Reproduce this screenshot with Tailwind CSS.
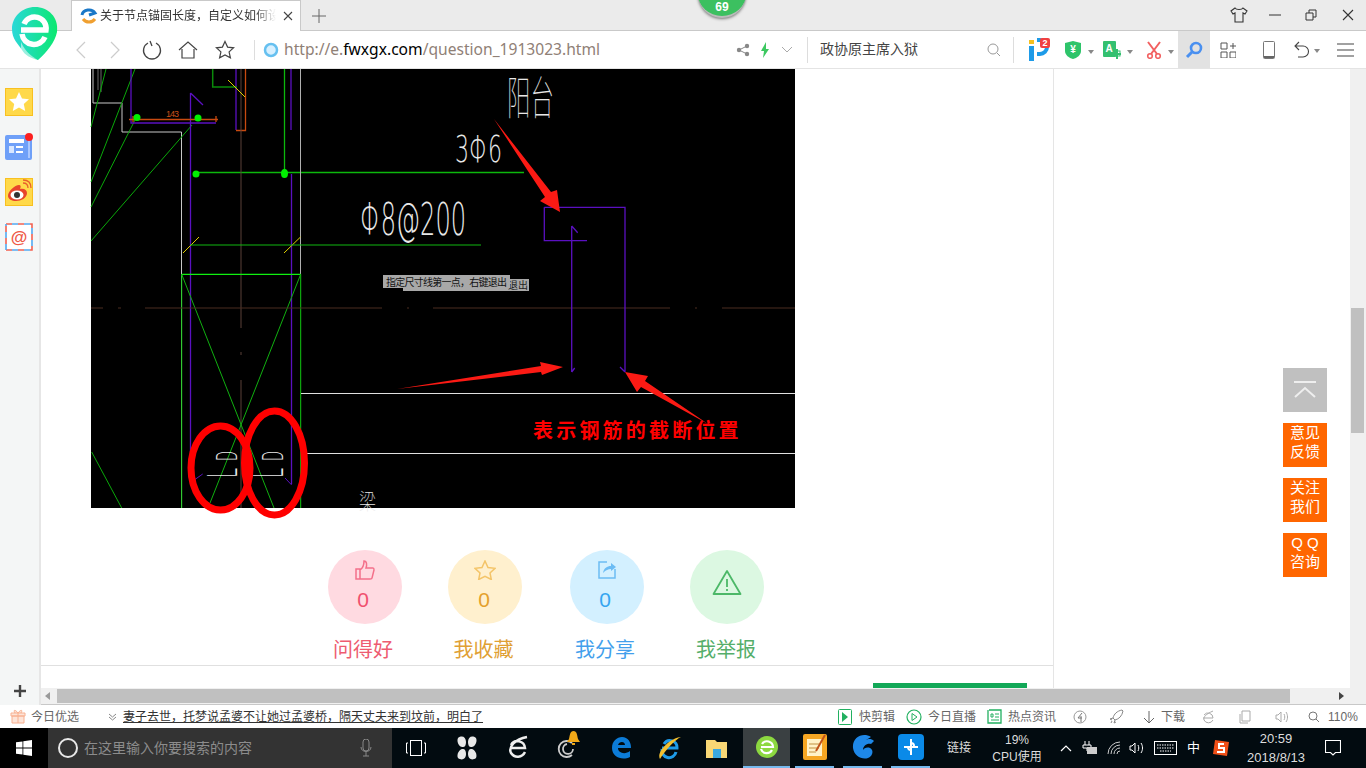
<!DOCTYPE html>
<html lang="zh-CN">
<head>
<meta charset="UTF-8">
<title>关于节点锚固长度，自定义如何设置</title>
<script src="https://cdn.jsdelivr.net/npm/@tailwindcss/browser@4"></script>
</head>
<body class="bg-white overflow-hidden">
<div class="relative w-[1366px] h-[768px] overflow-hidden flex flex-col font-['Liberation_Sans','Noto_Sans_CJK_SC',sans-serif]">

  <!-- tab strip -->
  <div class="h-[31px] shrink-0 bg-[#ebebeb] border-b border-[#c9c9c9] flex items-start pl-[71px]">
    <div class="w-[230px] h-[31px] bg-white border border-b-0 border-[#c9c9c9] flex items-center pl-[8px] pr-[7px]">
      <svg width="18" height="18" viewBox="0 0 18 18" class="shrink-0"><path d="M2 8a7 6 0 0 1 13-2l-6 2" fill="none" stroke="#1a78c8" stroke-width="3"/><path d="M3 12c3 4 9 4 12 0" fill="none" stroke="#f0a030" stroke-width="3"/></svg>
      <span class="ml-[2px] w-[176px] overflow-hidden whitespace-nowrap text-[12px] text-[#333] [mask-image:linear-gradient(to_right,black_88%,transparent)]">关于节点锚固长度，自定义如何设</span>
      <svg width="10" height="10" viewBox="0 0 10 10" class="ml-auto"><path d="M1 1l8 8M9 1l-8 8" stroke="#444" stroke-width="1.100"/></svg>
    </div>
    <svg width="14" height="14" viewBox="0 0 14 14" class="ml-[11px] mt-[9px]"><path d="M7 0v14M0 7h14" stroke="#666" stroke-width="1"/></svg>
    <div class="ml-auto flex items-center h-[30px]">
      <svg width="18" height="18" viewBox="0 0 18 18"><path d="M5 2l-4 3 2 3 2-1v9h8V7l2 1 2-3-4-3c-1 2-7 2-8 0z" fill="none" stroke="#333" stroke-width="1.100"/></svg>
      <svg width="12" height="12" viewBox="0 0 12 12" class="ml-[21px]"><path d="M0 6h12" stroke="#333"/></svg>
      <svg width="12" height="12" viewBox="0 0 12 12" class="ml-[24px]"><path d="M1 4h7v7H1zM4 4V1h7v7H8" fill="none" stroke="#333"/></svg>
      <svg width="12" height="12" viewBox="0 0 12 12" class="ml-[25px] mr-[12px]"><path d="M1 1l10 10M11 1L1 11" stroke="#333" stroke-width="1.100"/></svg>
    </div>
  </div>

  <!-- address bar -->
  <div class="h-[38px] shrink-0 bg-white border-b border-[#e4e4e4] flex items-center">
    <svg width="12" height="20" viewBox="0 0 12 20" class="ml-[75px]"><path d="M10 2L2 10l8 8" fill="none" stroke="#ccc" stroke-width="1.200"/></svg>
    <svg width="12" height="20" viewBox="0 0 12 20" class="ml-[22px]"><path d="M2 2l8 8-8 8" fill="none" stroke="#ccc" stroke-width="1.200"/></svg>
    <svg width="20" height="22" viewBox="0 0 20 22" class="ml-[21px]"><path d="M6 4a8.500 8.500 0 1 0 8 0M8 2l2 5" fill="none" stroke="#444" stroke-width="1.300"/></svg>
    <svg width="20" height="20" viewBox="0 0 20 20" class="ml-[16px]"><path d="M1 10l9-8 9 8M4 9v9h12V9" fill="none" stroke="#444" stroke-width="1.200"/></svg>
    <svg width="20" height="20" viewBox="0 0 20 20" class="ml-[17px]"><path d="M10 1.500l2.600 5.600 6 .7-4.500 4.100 1.300 6L10 15l-5.400 2.900 1.300-6-4.500-4.100 6-.7z" fill="none" stroke="#444" stroke-width="1.200"/></svg>
    <div class="ml-[19px] w-px h-[20px] bg-[#ddd]"></div>
    <svg width="16" height="16" viewBox="0 0 16 16" class="ml-[8px]"><circle cx="8" cy="8" r="6" fill="#d8f0ff" stroke="#66c0f0" stroke-width="2.500"/></svg>
    <div class="ml-[5px] w-[452px] whitespace-nowrap font-['Noto_Sans',sans-serif] text-[15.6px] text-[#8f8076]">http://e.<span class="text-black">fwxgx.com</span>/question_1913023.html</div>
    <svg width="14" height="14" viewBox="0 0 14 14"><path d="M3 7l8-4M3 7l8 4" stroke="#888"/><circle cx="3" cy="7" r="2.200" fill="#888"/><circle cx="11" cy="3" r="2.200" fill="#888"/><circle cx="11" cy="11" r="2.200" fill="#888"/></svg>
    <svg width="10" height="16" viewBox="0 0 10 16" class="ml-[10px]"><path d="M6 0L1 9h3l-1 7 6-9H6z" fill="#3cc860"/></svg>
    <svg width="12" height="8" viewBox="0 0 12 8" class="ml-[11px]"><path d="M1 1l5 5 5-5" fill="none" stroke="#aaa"/></svg>
    <div class="ml-[14px] w-px h-[26px] bg-[#ddd]"></div>
    <div class="ml-[12px] w-[160px] text-[14px] text-[#444] whitespace-nowrap">政协原主席入狱</div>
    <svg width="14" height="14" viewBox="0 0 14 14" class="ml-[7px]"><circle cx="6" cy="6" r="5" fill="none" stroke="#999"/><path d="M10 10l3 3" stroke="#999"/></svg>
    <div class="ml-[12px] w-px h-[26px] bg-[#ddd]"></div>
    <!-- plugin icons -->
    <svg width="24" height="24" viewBox="0 0 24 24" class="ml-[14px]"><rect x="1" y="8" width="5" height="15" fill="#1e9be8"/><rect x="1" y="2" width="5" height="4" fill="#f5c020"/><path d="M9 2h3a7 7 0 0 1 0 14H9" fill="none" stroke="#1e9be8" stroke-width="4"/><rect x="12" y="0" width="10" height="10" rx="2" fill="#f04040"/><text x="17" y="8" text-anchor="middle" font-size="9" font-weight="700" fill="#fff">2</text></svg>
    <svg width="18" height="20" viewBox="0 0 18 20" class="ml-[12px]"><path d="M9 1l8 2v8c0 4-4 7-8 8-4-1-8-4-8-8V3z" fill="#2ec46a"/><text x="9" y="13" text-anchor="middle" font-size="10" font-weight="700" fill="#fff">¥</text></svg>
    <svg width="6" height="4" viewBox="0 0 6 4" class="ml-[6px] mt-[4px]"><path d="M0 0h6L3 4z" fill="#888"/></svg>
    <svg width="20" height="20" viewBox="0 0 20 20" class="ml-[8px]"><rect x="1" y="1" width="13" height="16" rx="1" fill="#34c070"/><text x="7" y="12" text-anchor="middle" font-size="10" font-weight="700" fill="#fff">A</text><path d="M15 9v10M11 14h8" stroke="#34c070" stroke-width="2"/><rect x="12" y="11" width="6" height="5" fill="none" stroke="#34c070"/></svg>
    <svg width="6" height="4" viewBox="0 0 6 4" class="ml-[5px] mt-[4px]"><path d="M0 0h6L3 4z" fill="#888"/></svg>
    <svg width="16" height="18" viewBox="0 0 16 18" class="ml-[13px]"><path d="M2 1l9 12M14 1L5 13" stroke="#f26060" stroke-width="2"/><circle cx="4" cy="15" r="2.300" fill="none" stroke="#f26060" stroke-width="1.600"/><circle cx="12" cy="15" r="2.300" fill="none" stroke="#f26060" stroke-width="1.600"/></svg>
    <svg width="6" height="4" viewBox="0 0 6 4" class="ml-[6px] mt-[4px]"><path d="M0 0h6L3 4z" fill="#888"/></svg>
    <div class="ml-[4px] w-[32px] h-[37px] bg-[#e2e2e2] flex items-center justify-center">
      <svg width="18" height="18" viewBox="0 0 18 18"><circle cx="11" cy="7" r="5" fill="none" stroke="#4a90f0" stroke-width="2.600"/><path d="M7 11l-5 5" stroke="#4a90f0" stroke-width="3"/></svg>
    </div>
    <svg width="16" height="16" viewBox="0 0 16 16" class="ml-[10px]"><path d="M1 1h6v6H1zM1 10h6v6H1zM10 10h6v6h-6zM13 1v6M10 4h6" fill="none" stroke="#555"/></svg>
    <svg width="12" height="18" viewBox="0 0 12 18" class="ml-[27px]"><rect x=".5" y=".5" width="11" height="17" rx="1" fill="none" stroke="#777"/><rect x="1" y="15" width="10" height="2" fill="#666"/></svg>
    <svg width="16" height="18" viewBox="0 0 16 18" class="ml-[19px]"><path d="M5 1L1 5l4 4M1 5h8a5.500 5.500 0 0 1 0 11H4" fill="none" stroke="#444" stroke-width="1.100"/></svg>
    <svg width="6" height="4" viewBox="0 0 6 4" class="ml-[4px] mt-[2px]"><path d="M0 0h6L3 4z" fill="#888"/></svg>
    <svg width="17" height="14" viewBox="0 0 17 14" class="ml-[17px]"><path d="M0 1h17M0 7h17M0 13h17" stroke="#444" stroke-width="1.200"/></svg>
  </div>

  <!-- browser window body -->
  <div class="h-[636px] shrink-0 flex">
    <div class="w-[41px] shrink-0 bg-[#f4f6f6] border-r-2 border-[#e6e6e6] flex flex-col items-start pl-[5px] pt-[19px] gap-[17px]">
      <svg width="28" height="28" viewBox="0 0 28 28"><rect x=".5" y=".5" width="27" height="27" fill="#ffd94a" stroke="#f8c020"/><path d="M14 4l3 6.500 7 .8-5.200 4.800 1.400 7L14 19.600 7.800 23l1.400-7L4 11.300l7-.8z" fill="#fff"/></svg>
      <svg width="28" height="28" viewBox="0 0 28 28"><rect x="0" y="2" width="27" height="25" rx="2" fill="#6fa0f8"/><rect x="23" y="4" width="2" height="21" fill="#a9c7ff"/><rect x="4" y="6" width="15" height="4" fill="#fff"/><rect x="4" y="13" width="5" height="7" fill="#d7e6ff"/><path d="M11 14h7M11 19h7" stroke="#fff" stroke-width="2"/><circle cx="24" cy="4" r="4" fill="#fb2020"/></svg>
      <svg width="28" height="28" viewBox="0 0 28 28"><rect x=".5" y=".5" width="27" height="27" fill="#ffd94a" stroke="#f8c020"/><path d="M3 18c0-5 7-11 11-11 2 0 2 2 1 4 4-1 7 1 7 4 0 5-6 8-11 8-4 0-8-2-8-5z" fill="#e8442c"/><ellipse cx="12" cy="17" rx="6.500" ry="4.500" fill="#fff"/><circle cx="12" cy="17" r="3" fill="#333"/><path d="M18 5c3 0 5 2 5 5M18 2c5 0 8 3 8 8" fill="none" stroke="#e8602c" stroke-width="1.300"/></svg>
      <svg width="28" height="28" viewBox="0 0 28 28"><rect x="0" y="0" width="28" height="28" fill="#fff"/><rect x="1" y="1" width="26" height="26" fill="none" stroke="#f06050" stroke-width="1.600" stroke-dasharray="6 6"/><rect x="1" y="1" width="26" height="26" fill="none" stroke="#50a8f0" stroke-width="1.600" stroke-dasharray="6 6" stroke-dashoffset="6"/><text x="14" y="20" text-anchor="middle" font-size="17" font-weight="700" fill="#ee5a48">@</text></svg>
      <svg width="14" height="14" viewBox="0 0 14 14" class="ml-[8px] mt-[416px]"><path d="M7 1v12M1 7h12" stroke="#444" stroke-width="2.400"/></svg>
    </div>

    <div class="w-[1325px] flex flex-col">
      <div class="h-[619px] flex">
        <div class="w-[1013px] border-r border-[#e5e5e5] overflow-hidden flex flex-col">
          <div class="ml-[50px] w-[704px] h-[439px] shrink-0 bg-black">
            <!-- CAD drawing from the question, coordinates are page pixels -->
            <svg width="704" height="439" viewBox="91 69 704 439" class="overflow-visible block">
              <g fill="none" stroke-width="1">
                <path d="M93 69v34h29v29h59.500v376" stroke="#c8c8c8"/>
                <path d="M98 69v21M101 69v23" stroke="#6a6a6a"/>
                <path d="M106 69L91 127M135 69L91 182M135 120L91 207M192 125L91 241M91.700 452L121.700 508" stroke="#0aa80a"/>
                <path d="M131 69v54h85M190.500 93V484M190.500 93L203 105M236 69v61M291 69v61M291.500 174V484" stroke="#5a10c0" stroke-width="1.300"/>
                <path d="M245.500 69v61.500H236M129 119.500h89M133 116v6M216 116v6" stroke="#c84a10" stroke-width="1.300"/>
                <path d="M212.700 69v18H237" stroke="#0a8a0a" stroke-width="1.500"/>
                <path d="M284.500 69v104M196 172.500H524" stroke="#0cb80c" stroke-width="1.300"/>
                <path d="M300.500 69v205" stroke="#b0b0b0"/>
                <path d="M241 69v259M241 352v3M241 380v128" stroke="#5a4038"/>
                <path d="M228 80l17 17M183 253l16-16M284 253l16.500-16" stroke="#e0d000"/>
                <path d="M190 245H481" stroke="#10b810"/>
                <path d="M181.700 274.300H300.700" stroke="#10f010" stroke-width="1.300"/>
                <path d="M181.700 274.300V508M300.700 274.300V508" stroke="#10c810"/>
                <path d="M181.700 274.300L274 508M300.700 274.300L210 503" stroke="#10b010"/>
                <path d="M190 483l12.700-9M291.700 485l-6.700-7" stroke="#5a10c0"/>
                <path d="M91 308h12M118 308h3M145 308h237M407 308h2M433 308h237M695 308h2M722 308h73" stroke="#4a2c20"/>
                <path d="M301 393.500H795M306 453.500H795" stroke="#e0e0e0"/>
                <path d="M544.300 207.300H625V372M544.300 207.300V240.700H587M571.700 226V372M571.700 226l6 6.700M571.700 372l3-4M620 367l5 5" stroke="#5a10c0" stroke-width="1.300"/>
              </g>
              <circle cx="137" cy="117.500" r="3.500" fill="#00f000"/>
              <circle cx="198" cy="118" r="3.500" fill="#00f000"/>
              <circle cx="196" cy="174" r="3.500" fill="#00f000"/>
              <ellipse cx="284.500" cy="173.500" rx="3.500" ry="4.500" fill="#00f000"/>
              <text x="166" y="117" font-size="9" fill="#c8501a" textLength="13">143</text>
              <g fill="#e8e8e8" font-family="'DejaVu Sans','Noto Sans CJK SC',sans-serif" font-weight="200">
                <text x="507" y="114" font-size="46" textLength="47" lengthAdjust="spacingAndGlyphs" font-family="'Noto Sans CJK SC',sans-serif" font-weight="100">阳台</text>
                <text x="455" y="162" font-size="38" textLength="47" lengthAdjust="spacingAndGlyphs">3Φ6</text>
                <text x="360" y="235" font-size="44" textLength="106" lengthAdjust="spacingAndGlyphs">Φ8@200</text>
                <text x="359" y="509" font-size="22" textLength="17" lengthAdjust="spacingAndGlyphs" font-family="'Noto Sans CJK SC',sans-serif" font-weight="100">梁</text>
                <text transform="translate(237,478) rotate(-90) scale(.45,1)" font-size="40">L</text>
                <text transform="translate(237,461) rotate(-90) scale(.45,1)" font-size="29">D</text>
                <text transform="translate(283,478) rotate(-90) scale(.45,1)" font-size="40">L</text>
                <text transform="translate(283,461) rotate(-90) scale(.45,1)" font-size="29">D</text>
              </g>
              <rect x="403" y="279" width="126" height="12" fill="#a8a8a8"/>
              <text x="508" y="289" font-size="10" fill="#222">退出</text>
              <rect x="383" y="275" width="127" height="13" fill="#a8a8a8"/>
              <text x="386" y="286" font-size="10" fill="#111" textLength="121">指定尺寸线第一点，右键退出</text>
              <ellipse cx="220.500" cy="468" rx="29.500" ry="42" fill="none" stroke="#ff0000" stroke-width="7"/>
              <ellipse cx="274.500" cy="463" rx="30" ry="52" fill="none" stroke="#ff0000" stroke-width="7"/>
              <polygon points="494,119 551,192 557,190 560,212 540,201 545,197" fill="#fb1a14"/>
              <polygon points="397,389 541,366 540,362 563,367 542,375 541,372" fill="#fb1a14"/>
              <polygon points="708,424 645,381 648,376 625,372 637,392 641,387" fill="#fb1a14"/>
              <text x="533" y="438" font-size="20" font-weight="700" letter-spacing="3.200" fill="#f00" font-family="'Noto Sans CJK SC',sans-serif">表示钢筋的截断位置</text>
            </svg>
          </div>

          <!-- vote buttons -->
          <div class="ml-[287px] mt-[42px] flex shrink-0">
            <div class="w-[74px] flex flex-col items-center">
              <div class="w-[74px] h-[74px] rounded-full bg-[#ffdae1] flex flex-col items-center pt-[10px] text-[21px] leading-[24px] text-[#f0506e]">
                <svg width="20" height="20" viewBox="0 0 20 20"><path d="M1 9h4v10H1zM5 10c3-2 4-5 4-9 3 0 3 4 2 7h7c1 0 1 1 1 2l-2 8c0 1-1 1-2 1H5" fill="none" stroke="#f4708a" stroke-width="1.500"/></svg>
                <span class="mt-[8px] pr-[4px]">0</span>
              </div>
              <div class="mt-[14px] pr-[4px] w-full text-center whitespace-nowrap text-[20px] leading-[24px] text-[#ee5b70]">问得好</div>
            </div>
            <div class="ml-[46px] w-[74px] flex flex-col items-center">
              <div class="w-[74px] h-[74px] rounded-full bg-[#fff0ce] flex flex-col items-center pt-[10px] text-[21px] leading-[24px] text-[#e4a02c]">
                <svg width="22" height="20" viewBox="0 0 22 20"><path d="M11 1l3 6.500 7 .8-5 4.700 1.300 6.500L11 16.300 4.700 19.500 6 13 1 8.300l7-.8z" fill="none" stroke="#f4c468" stroke-width="1.500"/></svg>
                <span class="mt-[8px] pr-[2px]">0</span>
              </div>
              <div class="mt-[14px] pr-[3px] w-full text-center whitespace-nowrap text-[20px] leading-[24px] text-[#e0a034]">我收藏</div>
            </div>
            <div class="ml-[48px] w-[74px] flex flex-col items-center">
              <div class="w-[74px] h-[74px] rounded-full bg-[#d3f0ff] flex flex-col items-center pt-[10px] text-[21px] leading-[24px] text-[#35a5f0]">
                <svg width="20" height="20" viewBox="0 0 20 20"><path d="M10 2H2v16h16V9" fill="none" stroke="#6cbcf4" stroke-width="1.500"/><path d="M6 13c1-5 4-7 8-7V3l5 4-5 4V9c-3 0-5 1-8 4z" fill="#6cbcf4"/></svg>
                <span class="mt-[8px] pr-[4px]">0</span>
              </div>
              <div class="mt-[14px] pr-[4px] w-full text-center whitespace-nowrap text-[20px] leading-[24px] text-[#439fec]">我分享</div>
            </div>
            <div class="ml-[46px] w-[74px] flex flex-col items-center">
              <div class="w-[74px] h-[74px] rounded-full bg-[#dcf8e2] flex items-start justify-center pt-[19px]">
                <svg width="30" height="27" viewBox="0 0 30 27"><path d="M15 2L1.500 25h27z" fill="none" stroke="#4cb868" stroke-width="1.800" stroke-linejoin="round"/><path d="M15 10v8M15 20v2" stroke="#4cb868" stroke-width="1.800"/></svg>
              </div>
              <div class="mt-[14px] pr-[2px] w-full text-center whitespace-nowrap text-[20px] leading-[24px] text-[#55ae6a]">我举报</div>
            </div>
          </div>

          <div class="mt-[3px] h-px shrink-0 bg-[#e0e0e0]"></div>
          <div class="ml-[832px] mt-[17px] w-[154px] h-[5px] shrink-0 bg-[#13a858]"></div>
        </div>
        <div class="w-[296px] bg-white"></div>
        <div class="w-[16px] bg-[#f0f0f0] pl-[1px] pr-[2px] pt-[239px]">
          <div class="h-[125px] bg-[#c0c0c0]"></div>
        </div>
      </div>
      <!-- horizontal scrollbar -->
      <div class="h-[17px] bg-[#f0f0f0] border-b border-[#c8c8c8] flex items-center">
        <svg width="6" height="8" viewBox="0 0 6 8" class="ml-[4px]"><path d="M5 0v8L0 4z" fill="#999"/></svg>
        <div class="ml-[6px] w-[1233px] h-[14px] bg-[#c0c0c0]"></div>
        <svg width="6" height="8" viewBox="0 0 6 8" class="ml-[49px]"><path d="M0 0v8l5-4z" fill="#444"/></svg>
      </div>
    </div>
  </div>

  <!-- status bar -->
  <div class="h-[23px] shrink-0 bg-white flex items-center text-[12px] text-[#666] whitespace-nowrap">
    <svg width="16" height="15" viewBox="0 0 16 15" class="ml-[10px]"><path d="M1 4h14v3H1zM2 7h12v7H2zM8 4v10M8 4C5 0 3 1 5 4M8 4c3-4 5-3 3 0" fill="#fde4d8" stroke="#f8b090"/></svg>
    <span class="ml-[5px] w-[48px] text-[12px]">今日优选</span>
    <svg width="9" height="8" viewBox="0 0 9 8" class="ml-[29px]"><path d="M1 1l3.500 3L8 1M1 4l3.500 3L8 4" fill="none" stroke="#888"/></svg>
    <span class="ml-[6px] w-[360px] text-[12px] text-[#333] underline">妻子去世，托梦说孟婆不让她过孟婆桥，隔天丈夫来到坟前，明白了</span>
    <svg width="14" height="16" viewBox="0 0 14 16" class="ml-[355px]"><rect x=".5" y=".5" width="13" height="15" rx="1" fill="none" stroke="#22b060"/><path d="M4 3l6 5-6 5z" fill="#22b060"/></svg>
    <span class="ml-[7px] w-[36px]">快剪辑</span>
    <svg width="16" height="16" viewBox="0 0 16 16" class="ml-[11px]"><circle cx="8" cy="8" r="7" fill="none" stroke="#22b060" stroke-width="1.200"/><path d="M6 4.500l5 3.500-5 3.500z" fill="none" stroke="#22b060"/></svg>
    <span class="ml-[6px] w-[49px]">今日直播</span>
    <svg width="15" height="15" viewBox="0 0 15 15" class="ml-[10px]"><path d="M2 1h12v13H1V1" fill="none" stroke="#22b060" stroke-width="1.300"/><path d="M4 5h2v3H4zM8 5h4M8 8h4M4 11h8" stroke="#22b060" fill="none"/></svg>
    <span class="ml-[6px] w-[48px]">热点资讯</span>
    <svg width="14" height="14" viewBox="0 0 14 14" class="ml-[17px]"><circle cx="7" cy="7" r="6" fill="none" stroke="#999"/><path d="M9 3L5 8h4M8 6v6" fill="none" stroke="#777"/></svg>
    <svg width="15" height="15" viewBox="0 0 15 15" class="ml-[22px]"><path d="M13 1c-5 1-8 4-9 8l2 2c4-1 7-4 8-9zM4 9l-3 1 2 1M6 11l-1 3 2-1M3 12l-1 2" fill="none" stroke="#888"/></svg>
    <svg width="12" height="14" viewBox="0 0 12 14" class="ml-[19px]"><path d="M6 1v12M1 8l5 5 5-5" fill="none" stroke="#666"/></svg>
    <span class="ml-[6px] w-[24px]">下载</span>
    <svg width="14" height="14" viewBox="0 0 14 14" class="ml-[16px]"><path d="M2 8h10a5 5 0 0 0-9-3M12 10a5 5 0 0 1-9 0c-1-3 2-6 9-9" fill="none" stroke="#aaa"/></svg>
    <svg width="12" height="14" viewBox="0 0 12 14" class="ml-[24px]"><path d="M1 4v9h8M3 1h8v10H3z" fill="none" stroke="#aaa"/></svg>
    <svg width="14" height="14" viewBox="0 0 14 14" class="ml-[24px]"><path d="M1 5v4h2l3 3V2L3 5zM9 4c1 2 1 4 0 6M11 2c2 3 2 7 0 10" fill="none" stroke="#aaa"/></svg>
    <svg width="12" height="12" viewBox="0 0 12 12" class="ml-[19px]"><circle cx="5" cy="5" r="4" fill="none" stroke="#777"/><path d="M8 8l3 3" stroke="#777"/></svg>
    <span class="ml-[8px]">110%</span>
  </div>

  <!-- windows taskbar -->
  <div class="h-[40px] shrink-0 bg-[#020b10] flex items-center text-white whitespace-nowrap relative">
    <div class="w-[48px] h-[40px] bg-black flex items-center justify-center">
      <svg width="16" height="16" viewBox="0 0 16 16"><path d="M0 2.300l6.500-.9v6.200H0zM7.300 1.300L16 0v7.600H7.300zM0 8.400h6.500v6.200L0 13.700zM7.300 8.400H16V16l-8.700-1.300z" fill="#fff"/></svg>
    </div>
    <div class="w-[344px] h-[40px] bg-[#333] flex items-center">
      <svg width="22" height="22" viewBox="0 0 22 22" class="ml-[9px]"><circle cx="11" cy="11" r="9" fill="none" stroke="#e8e8e8" stroke-width="2"/></svg>
      <span class="ml-[5px] w-[276px] text-[14px] text-[#8c8c8c]">在这里输入你要搜索的内容</span>
      <svg width="12" height="18" viewBox="0 0 12 18"><rect x="3" y="0" width="6" height="12" rx="3" fill="none" stroke="#888"/><path d="M1 8c0 6 10 6 10 0M6 13v4M3 17h6" fill="none" stroke="#888"/></svg>
    </div>
    <svg width="20" height="16" viewBox="0 0 20 16" class="ml-[14px]"><rect x="4.500" y=".5" width="11" height="15" fill="none" stroke="#fff"/><path d="M2 3H.5v10H2M18 3h1.500v10H18" fill="none" stroke="#fff"/></svg>
    <svg width="24" height="26" viewBox="0 0 24 26" class="ml-[29px]"><path d="M3 3c4-3 8-1 8 4 0 3-1 5-3 5-3 1-7-5-5-9zM21 3c2 4-2 10-5 9-2 0-3-2-3-5 0-5 4-7 8-4zM3 23c-2-4 2-10 5-9 2 0 3 2 3 5 0 5-4 7-8 4zM21 23c-4 3-8 1-8-4 0-3 1-5 3-5 3-1 7 5 5 9z" fill="#e8e8e8"/></svg>
    <svg width="22" height="26" viewBox="0 0 22 26" class="ml-[28px]"><path d="M3 13h15a7.500 7.500 0 0 0-14-3M18 17a8 8 0 0 1-14 1C1 12 8 4 20 2" fill="none" stroke="#eee" stroke-width="2.500"/></svg>
    <div class="relative ml-[26px] w-[24px] h-[26px]">
      <svg width="24" height="26" viewBox="0 0 24 26"><path d="M17 8A8 8 0 1 0 17 20M18 14a5 5 0 1 1-6-5" fill="none" stroke="#ccc" stroke-width="1.800"/></svg>
      <svg width="13" height="14" viewBox="0 0 13 14" class="absolute left-[12px] top-[-4px]"><path d="M6.500 0C10 0 10 4 11 8l2 3H0l2-3c1-4 1-8 4.500-8zM5 12h3v2H5z" fill="#f0a818"/></svg>
    </div>
    <svg width="22" height="24" viewBox="0 0 22 24" class="ml-[31px]"><path d="M2 12C2 5 7 1 12 1c6 0 9 5 9 11H8c0 5 7 7 12 3v6c-8 4-18 0-18-9zM8 9h7c0-4-6-4-7 0z" fill="#0c7cd8"/></svg>
    <svg width="26" height="26" viewBox="0 0 26 26" class="ml-[25px]"><path d="M5 13h15a7 7 0 0 0-13-4M19 17a7 7 0 0 1-14-3" fill="none" stroke="#1e9be8" stroke-width="3"/><path d="M3 24C-1 18 12 3 24 2c-5 2-15 12-21 22z" fill="#f2c030"/></svg>
    <svg width="24" height="22" viewBox="0 0 24 22" class="ml-[22px]"><path d="M1 3h9l2 2h10v16H1z" fill="#f8d775"/><rect x="8" y="12" width="8" height="9" fill="#3aa8e0"/></svg>
    <div class="ml-[14px] w-[47px] h-[40px] bg-[#3a4042] border-b-2 border-[#76b9ed] flex items-center justify-center">
      <svg width="26" height="28" viewBox="0 0 26 28"><circle cx="13" cy="14" r="11" fill="#8cd840"/><path d="M7 14h12a6 6 0 0 0-11-3M18 17a6 6 0 0 1-11-1" fill="none" stroke="#fff" stroke-width="2.200"/></svg>
    </div>
    <div class="ml-[5px] w-[39px] h-[40px] border-b-2 border-[#76b9ed] flex items-center justify-center">
      <svg width="24" height="26" viewBox="0 0 24 26"><rect width="24" height="26" rx="2" fill="#f5a623"/><rect x="4" y="5" width="15" height="17" fill="#fff2c8"/><path d="M6 10h10M6 14h10M6 18h7" stroke="#c09040"/><path d="M22 1L13 17" stroke="#c0521a" stroke-width="2"/></svg>
    </div>
    <div class="ml-[9px] w-[39px] h-[40px] border-b-2 border-[#76b9ed] flex items-center justify-center">
      <svg width="24" height="28" viewBox="0 0 24 28"><path d="M20 4C12-1 1 4 2 15c1 8 9 12 15 10 5-2 6-8 2-10-3-1-6 0-7 2 0-4 4-7 8-6l3-3c-3-3-6-2-8-1z" fill="#1e88e8"/></svg>
    </div>
    <div class="ml-[9px] w-[39px] h-[40px] border-b-2 border-[#76b9ed] flex items-center justify-center">
      <svg width="26" height="26" viewBox="0 0 26 26"><rect width="26" height="26" rx="4" fill="#0a8ae8"/><path d="M13 5v16M6 13h14M13 9a3 3 0 0 1 3 3M10 13a3 3 0 0 0 3 3" fill="none" stroke="#fff" stroke-width="2"/></svg>
    </div>
    <span class="ml-[17px] text-[12px] text-[#ddd]">链接</span>
    <div class="ml-[21px] w-[50px] text-center text-[12px] leading-[17px] text-[#ddd] pt-[1px]">19%<br>CPU使用</div>
    <svg width="12" height="8" viewBox="0 0 12 8" class="ml-[18px]"><path d="M1 7l5-5 5 5" fill="none" stroke="#fff" stroke-width="1.200"/></svg>
    <svg width="16" height="14" viewBox="0 0 16 14" class="ml-[10px]"><path d="M3 0v4M7 0v4M1 4h8v3H1zM5 7v3" stroke="#fff" fill="none"/><rect x="5" y="6" width="10" height="7" fill="#ccc"/></svg>
    <svg width="14" height="14" viewBox="0 0 14 14" class="ml-[9px]"><path d="M1 13a12 12 0 0 1 12-12M4 13a9 9 0 0 1 9-9M7 13a6 6 0 0 1 6-6M10 13a3 3 0 0 1 3-3" fill="none" stroke="#ccc"/></svg>
    <svg width="16" height="14" viewBox="0 0 16 14" class="ml-[8px]"><path d="M1 5v4h2l3 3V2L3 5zM9 4c1 2 1 4 0 6M12 2c2 3 2 7 0 10" fill="none" stroke="#fff"/></svg>
    <svg width="23" height="14" viewBox="0 0 23 14" class="ml-[9px]"><rect x=".5" y=".5" width="22" height="13" fill="none" stroke="#fff"/><path d="M3 4h17M3 7h17M6 10h11" stroke="#fff" stroke-dasharray="1.500 1"/></svg>
    <span class="ml-[10px] text-[13px]">中</span>
    <svg width="18" height="18" viewBox="0 0 18 18" class="ml-[12px]"><path d="M3 1l14 2-2 14-14-2z" fill="#f05018"/><path d="M12 5H7v4h5v4H5" fill="none" stroke="#fff" stroke-width="2"/></svg>
    <div class="ml-[14px] w-[64px] text-center text-[13px] leading-[19px] text-[#ddd]">20:59<br>2018/8/13</div>
    <svg width="16" height="16" viewBox="0 0 16 16" class="ml-[17px]"><path d="M.5.5h15v12h-5L8 15l-2.500-2.500h-5z" fill="none" stroke="#fff" stroke-width="1.100"/></svg>
  </div>

  <!-- overlays: logo, score badge, floating page buttons -->
  <svg width="48" height="56" viewBox="0 0 48 56" class="absolute left-[11px] top-[6px]">
    <defs><linearGradient id="eg" x1="0" y1="0" x2="1" y2="0"><stop offset="0" stop-color="#2ad8d8"/><stop offset="1" stop-color="#0ce870"/></linearGradient></defs>
    <path d="M24 1C11 1 1 11 1 23c0 10 6 15 10 21 3 5 8 8 16 10 9-8 17-18 19-28C48 11 37 1 24 1z" fill="url(#eg)"/>
    <path d="M10 24h25a11.500 11.500 0 0 0-22-6M34 31a12 12 0 0 1-23-3" fill="none" stroke="#fff" stroke-width="5.500"/>
    <path d="M10 36c5 12 12 14 19 20H10z" fill="#fff" opacity=".55"/>
  </svg>
  <div class="absolute left-[698px] top-[-30px] w-[48px] h-[48px] rounded-full bg-[#3cc060] border-b-2 border-[#bbb] shadow-[0_1px_3px_rgba(0,0,0,0.5)] flex items-end justify-center pb-[1px] text-[12px] leading-[16px] font-bold text-white">69</div>

  <div class="absolute left-[1283px] top-[368px] w-[44px] flex flex-col gap-[11px]">
    <div class="h-[44px] bg-[#c0c0c0] flex items-center justify-center">
      <svg width="24" height="18" viewBox="0 0 24 18"><path d="M1 1h22M2 16l10-9 10 9" fill="none" stroke="#eee" stroke-width="2"/></svg>
    </div>
    <div class="h-[44px] bg-[#ff6600] text-white text-center text-[15px] leading-[19px]">意见<br>反馈</div>
    <div class="h-[44px] bg-[#ff6600] text-white text-center text-[15px] leading-[19px]">关注<br>我们</div>
    <div class="h-[44px] bg-[#ff6600] text-white text-center text-[15px] leading-[19px]">Q Q<br>咨询</div>
  </div>
</div>
</body>
</html>
